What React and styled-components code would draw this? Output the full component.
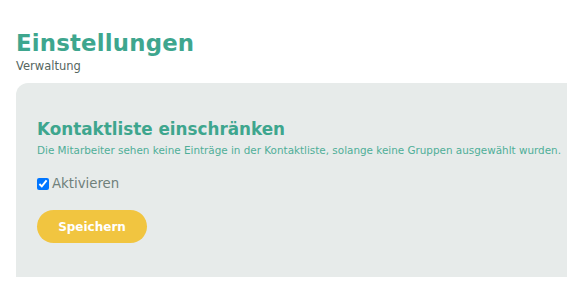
import styled, { createGlobalStyle } from 'styled-components'

const GlobalStyle = createGlobalStyle`
  body {
    margin: 0;
    background: #fff;
    font-family: "DejaVu Sans", "Noto Sans", sans-serif;
  }
`

const Page = styled.div`
  padding: 28px 0 0 16px;
  overflow: hidden;
`

const Header = styled.header`
  margin-bottom: 8px;
`

const Title = styled.h1`
  margin: 0;
  font-size: 22.8px;
  line-height: 30px;
  font-weight: 700;
  color: #3ea68e;
  letter-spacing: 0.2px;
`

const Subtitle = styled.div`
  font-size: 11.5px;
  line-height: 17px;
  color: #556660;
`

const Panel = styled.section`
  background: #e7ebea;
  border-top-left-radius: 12px;
  padding: 35px 0 32px 21px;
  height: 127px;
`

const SectionTitle = styled.h2`
  margin: 0;
  font-size: 16.8px;
  line-height: 22px;
  font-weight: 700;
  color: #3ea68e;
`

const Description = styled.p`
  margin: 3px 0 0;
  font-size: 10.4px;
  line-height: 14px;
  color: #4fae98;
  white-space: nowrap;
`

const CheckRow = styled.label`
  display: flex;
  align-items: center;
  gap: 3px;
  margin-top: 19px;
  font-size: 13.3px;
  color: #6f807b;

  & input {
    margin: 0;
    width: 12px;
    height: 12px;
  }
`

const SaveButton = styled.button`
  margin-top: 19px;
  width: 110px;
  height: 33px;
  border: none;
  border-radius: 17px;
  background: #f1c540;
  color: #fff;
  font-family: inherit;
  font-size: 12px;
  font-weight: 700;
  cursor: pointer;
`

function App() {
  return (
    <Page>
      <GlobalStyle />
      <Header>
        <Title>Einstellungen</Title>
        <Subtitle>Verwaltung</Subtitle>
      </Header>
      <Panel>
        <SectionTitle>Kontaktliste einschränken</SectionTitle>
        <Description>
          Die Mitarbeiter sehen keine Einträge in der Kontaktliste, solange keine Gruppen ausgewählt wurden.
        </Description>
        <CheckRow>
          <input type="checkbox" defaultChecked />
          Aktivieren
        </CheckRow>
        <SaveButton>Speichern</SaveButton>
      </Panel>
    </Page>
  )
}

export default App
